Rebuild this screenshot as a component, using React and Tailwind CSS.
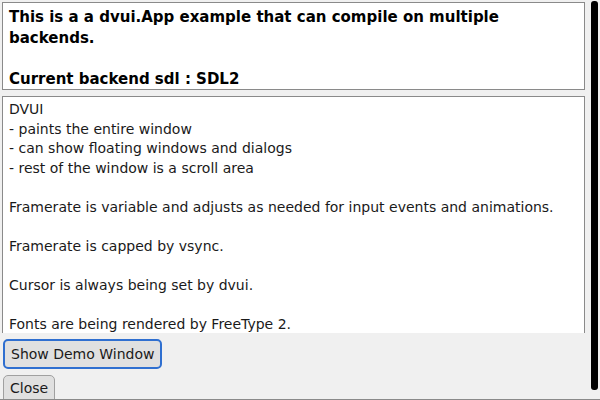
export default function App() {
  const font = { fontFamily: '"DejaVu Sans", sans-serif' };
  return (
    <div
      className="relative w-[600px] h-[400px] overflow-hidden bg-[#f0f0f0] text-[14px] leading-[19.5px] text-[#1a1a1a]"
      style={font}
    >
      <div className="flex flex-col w-[585px] pl-[2px] pt-[2px]">
        <div className="h-[88px] border border-[#8a8a8a] bg-white px-[6px] pt-[4px] text-[15px] leading-[20.5px] font-bold text-black">
          <div>This is a a dvui.App example that can compile on multiple backends.</div>
          <div className="h-[20.5px]" />
          <div>Current backend sdl : SDL2</div>
        </div>
        <div className="mt-[6px] h-[237px] overflow-hidden border border-b-0 border-[#8a8a8a] bg-white px-[6px] pt-[3px]">
          <div>DVUI</div>
          <div>- paints the entire window</div>
          <div>- can show floating windows and dialogs</div>
          <div>- rest of the window is a scroll area</div>
          <div className="h-[19.5px]" />
          <div>Framerate is variable and adjusts as needed for input events and animations.</div>
          <div className="h-[19.5px]" />
          <div>Framerate is capped by vsync.</div>
          <div className="h-[19.5px]" />
          <div>Cursor is always being set by dvui.</div>
          <div className="h-[19.5px]" />
          <div>Fonts are being rendered by FreeType 2.</div>
        </div>
        <div className="mt-[6px] flex">
          <div className="ml-[1px] rounded-[5px] border-2 border-[#2f6fd0] bg-[#e0e0e0] px-[6px] py-[3px] leading-[20px]">
            Show Demo Window
          </div>
        </div>
        <div className="mt-[6px] flex">
          <div className="ml-[1px] h-[30px] rounded-t-[5px] border border-[#a0a0a0] bg-[#e0e0e0] px-[6px] pt-[3px]">
            Close
          </div>
        </div>
      </div>
      <div className="absolute left-[591px] top-[1px] h-[389px] w-[7px] rounded-[3px] bg-black" />
      <div className="absolute left-0 right-0 bottom-0 h-[1px] bg-[#8a8a8a]" />
    </div>
  );
}
